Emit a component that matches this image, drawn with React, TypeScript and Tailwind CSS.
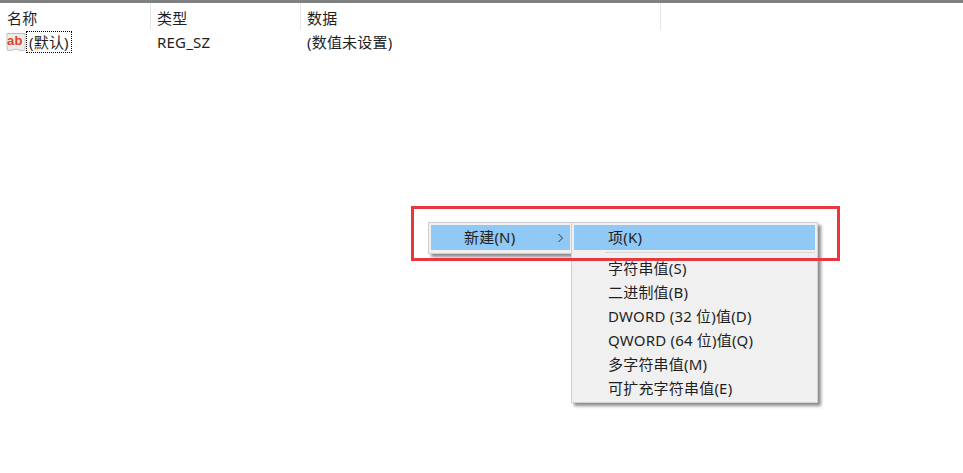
import React from 'react';

const columns = [
  { label: '名称', width: 'w-[151px]' },
  { label: '类型', width: 'w-[150px]' },
  { label: '数据', width: 'w-[360px]' },
];

const subItems = [
  '字符串值(S)',
  '二进制值(B)',
  'DWORD (32 位)值(D)',
  'QWORD (64 位)值(Q)',
  '多字符串值(M)',
  '可扩充字符串值(E)',
];

const font = "font-['Noto_Sans','Noto_Sans_CJK_SC',sans-serif]";

const RegIcon = () => (
  <svg width="20" height="19" viewBox="0 0 20 19" className="shrink-0">
    <path d="M1 .5h18v16c-2.200 1.600-4 1.600-6 .6s-4-1.200-6-.2-4.500.8-6-.2z" fill="#ececec" stroke="#bdbdbd" strokeWidth="1" />
    <rect x="1.500" y="2" width="17" height="11" fill="#fbe9e3" />
    <text x="1" y="12" fontSize="13" fontWeight="700" fill="#d8452c" fontFamily="'Liberation Sans', sans-serif">ab</text>
  </svg>
);

const App: React.FC = () => {
  return (
    <div className={`relative w-[963px] h-[473px] overflow-hidden bg-white text-[15px] tracking-[0.2px] text-[#1f1f1f] ${font}`}>
      {/* Top edge */}
      <div className="h-[3px] bg-[#808080]" />

      {/* Header */}
      <div className="flex h-[27px]">
        {columns.map((col) => (
          <div key={col.label} className={`${col.width} h-full pl-[6px] first:pl-[7px] pt-[5px] leading-[20px] border-r border-[#e5e5e5]`}>
            {col.label}
          </div>
        ))}
      </div>

      {/* Row */}
      <div className="flex h-[24px] items-center">
        <div className="w-[150px] flex items-center pl-[6px]">
          <RegIcon />
          <span className="px-[2px] leading-[20px] border border-dotted border-black">(默认)</span>
        </div>
        <div className="w-[150px] pl-[7px]">REG_SZ</div>
        <div className="pl-[7px]">(数值未设置)</div>
      </div>

      {/* Parent menu */}
      <div className="absolute left-[428px] top-[222px] w-[145px] h-[32px] p-[2px] bg-[#f0f0f0] border border-[#cfcfcf] shadow-[3px_3px_3px_rgba(0,0,0,0.45)]">
        <div className="flex items-center h-[25px] bg-[#90c8f6] pl-[33px]">
          <span>新建(N)</span>
          <svg width="7" height="10" viewBox="0 0 7 10" className="ml-[42px]">
            <path d="M1.500 1l4 4-4 4" fill="none" stroke="#333" strokeWidth="1" />
          </svg>
        </div>
      </div>

      {/* Sub menu */}
      <div className="absolute left-[571px] top-[222px] w-[247px] h-[181px] p-[2px] bg-[#f0f0f0] border border-[#cfcfcf] shadow-[3px_3px_3px_rgba(0,0,0,0.45)]">
        <div className="flex items-center h-[25px] bg-[#90c8f6] pl-[34px]">项(K)</div>
        <div className="h-[1px] mt-[2px] mb-[3px] ml-[31px] bg-[#d7d7d7]" />
        <div className="flex flex-col">
          {subItems.map((item) => (
            <div key={item} className="h-[24px] leading-[24px] pl-[34px] whitespace-nowrap">
              {item}
            </div>
          ))}
        </div>
      </div>

      {/* Red highlight */}
      <div className="absolute left-[411px] top-[206px] w-[429px] h-[55px] border-[3px] border-[#e8373f]" />
    </div>
  );
};

export default App;
